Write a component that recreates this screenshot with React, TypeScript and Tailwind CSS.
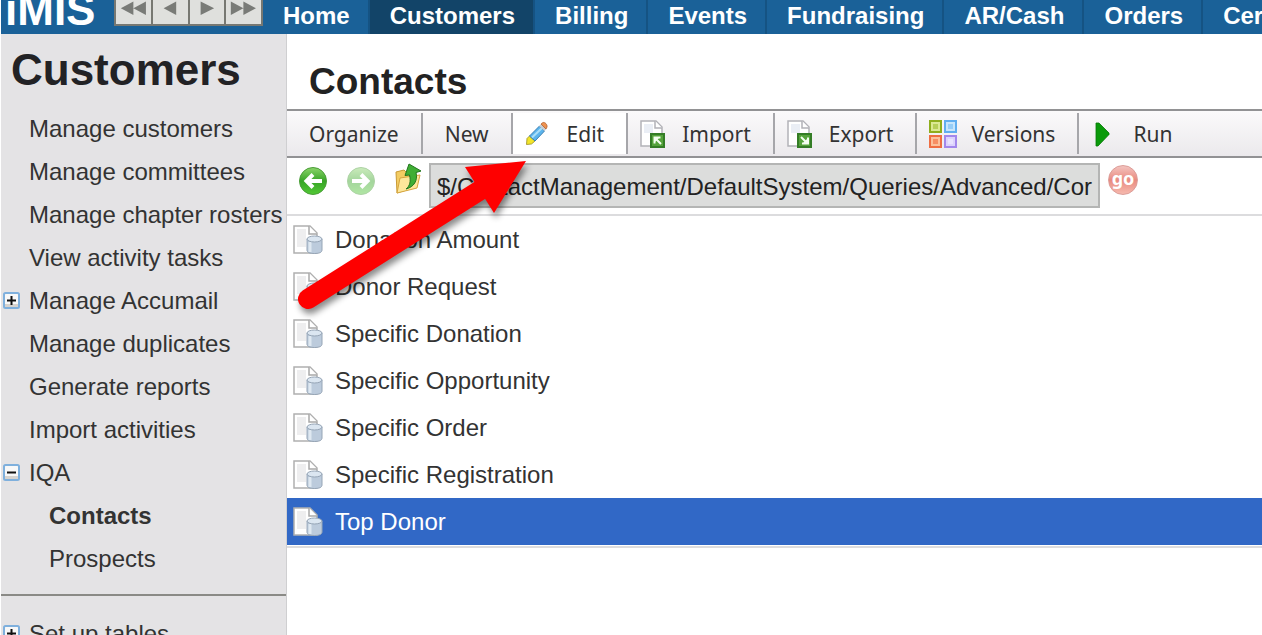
import { useState } from "react";
import type { ReactNode } from "react";

const tabs = ["Home", "Customers", "Billing", "Events", "Fundraising", "AR/Cash", "Orders", "Certification"];

interface NavItem {
  label: string;
  toggle?: "plus" | "minus";
  child?: boolean;
  active?: boolean;
}

const navItems: NavItem[] = [
  { label: "Manage customers" },
  { label: "Manage committees" },
  { label: "Manage chapter rosters" },
  { label: "View activity tasks" },
  { label: "Manage Accumail", toggle: "plus" },
  { label: "Manage duplicates" },
  { label: "Generate reports" },
  { label: "Import activities" },
  { label: "IQA", toggle: "minus" },
  { label: "Contacts", child: true, active: true },
  { label: "Prospects", child: true },
];

const queries = [
  "Donation Amount",
  "Donor Request",
  "Specific Donation",
  "Specific Opportunity",
  "Specific Order",
  "Specific Registration",
  "Top Donor",
];

function ToggleIcon({ kind }: { kind: "plus" | "minus" }) {
  return (
    <svg width="17" height="17" viewBox="0 0 17 17">
      <rect x="1" y="1" width="15" height="15" rx="1.5" fill="#f8f8f8" stroke="#7fb0dd" strokeWidth="2" />
      <path d="M2 12h13v3H2z" fill="#d6d3cf" />
      <path d="M4 8.5h9" stroke="#111" strokeWidth="2" />
      {kind === "plus" && <path d="M8.5 4v9" stroke="#111" strokeWidth="2" />}
    </svg>
  );
}

function PencilIcon() {
  return (
    <svg width="28" height="28" viewBox="0 0 28 28">
      <path d="M1.500 24.500L2 18.500 4.500 16l5.500 5-3.500 3z" fill="#f2e52a" stroke="#9a8d1c" strokeWidth="0.8" />
      <path d="M4.500 16L14.500 6l5 5L10 21z" fill="#5bb4ec" stroke="#3980b5" strokeWidth="1" />
      <path d="M7 17.500L17 8" stroke="#a9def8" strokeWidth="2" />
      <path d="M14 6l2-2 5.500 5-2 2z" fill="#c7cdd2" />
      <path d="M16 4l2-1.500c2-.5 4.500 2 4 4.500L21 9z" fill="#ee9250" stroke="#b4602c" strokeWidth="0.8" />
    </svg>
  );
}

function TransferIcon({ out }: { out?: boolean }) {
  return (
    <svg width="28" height="30" viewBox="0 0 28 30">
      <path d="M1 2h15l6 6v19H1z" fill="#fff" stroke="#b3b3b8" strokeWidth="1.500" />
      <path d="M4 5h9v9H4z" fill="#eaeef5" />
      <path d="M15 2v7h7" fill="#fff" stroke="#b3b3b8" strokeWidth="1.500" />
      <rect x="10" y="14" width="15" height="15" fill="#55a33b" />
      <rect x="11" y="15" width="13" height="13" fill="none" stroke="#347d26" strokeWidth="2" />
      <path
        d={out ? "M14 18l5 5M21 18.500v6h-6" : "M21 25l-5-5M14.500 24.500v-6h6"}
        fill="none"
        stroke="#f4fff0"
        strokeWidth="2"
      />
      <path d={out ? "M21 19v6h-6z" : "M14 18h6l-6 6z"} fill="#f4fff0" />
    </svg>
  );
}

function VersionsIcon() {
  return (
    <svg width="28" height="28" viewBox="0 0 28 28">
      <rect x="1" y="1" width="11" height="11" fill="#dbe992" stroke="#8fae1d" strokeWidth="2" />
      <rect x="16" y="1" width="11" height="11" fill="#c6e5fc" stroke="#61aef0" strokeWidth="2" />
      <rect x="1" y="16" width="11" height="11" fill="#fbc09c" stroke="#ef6e43" strokeWidth="2" />
      <rect x="16" y="16" width="11" height="11" fill="#ddd3fd" stroke="#a388ec" strokeWidth="2" />
      <path d="M4 4h5v5H4z" fill="#b7cf58" />
      <path d="M19 4h5v5h-5z" fill="#96cdf7" />
      <path d="M4 19h5v5H4z" fill="#f68e63" />
      <path d="M19 19h5v5h-5z" fill="#e9e3ff" />
    </svg>
  );
}

function RunIcon() {
  return (
    <svg width="28" height="28" viewBox="0 0 28 28">
      <path d="M5 3v23h2L18 14.500v-1.500L8 3z" fill="#0a9a0a" stroke="#067806" strokeWidth="0.800" />
    </svg>
  );
}

function HistoryIcon({ forward }: { forward?: boolean }) {
  return (
    <svg width="28" height="28" viewBox="0 0 28 28" opacity={forward ? 0.45 : 1}>
      <defs>
        <linearGradient id={forward ? "fwd" : "back"} x1="0" y1="0" x2="0" y2="1">
          <stop offset="0" stopColor="#8cd56b" />
          <stop offset="0.5" stopColor="#37a426" />
          <stop offset="1" stopColor="#52c935" />
        </linearGradient>
      </defs>
      <circle cx="14" cy="14" r="13.500" fill={forward ? "url(#fwd)" : "url(#back)"} stroke="#4a9d38" strokeWidth="1" />
      <path
        d={forward ? "M5 14h15M14 7.500l6.500 6.500-6.500 6.500" : "M23 14H8M14 7.500L7.500 14l6.500 6.500"}
        fill="none"
        stroke="#fff"
        strokeWidth="4"
      />
    </svg>
  );
}

function FolderUpIcon() {
  return (
    <svg width="26" height="36" viewBox="0 0 26 36">
      <path d="M1 9l8-2 2 2 9-1 1 16L2 30z" fill="#f3cc62" stroke="#c99a35" strokeWidth="1" />
      <path d="M2 30l3-15 20-3-3 13z" fill="#fde79b" stroke="#d6a53e" strokeWidth="1" />
      <path
        d="M11 26c4-3 5-8 3.500-14l-4.500.5L14 1l12 7-5 1.500c2 8-2 14.500-10 16.500z"
        fill="#3fae34"
        stroke="#23761e"
        strokeWidth="1"
      />
    </svg>
  );
}

function QueryIcon() {
  return (
    <svg width="30" height="30" viewBox="0 0 30 30">
      <path d="M1 1h16l7 7v20H1z" fill="#fff" stroke="#b0b0b0" strokeWidth="1.500" />
      <path d="M4 4h9v18H4z" fill="#eeeeef" />
      <path d="M16 1v8h8" fill="#fff" stroke="#a9a9a9" strokeWidth="1.500" />
      <path d="M14 14v11c0 2.500 3 3.500 7.500 3.500S29 27.500 29 25V14z" fill="#bccbdc" stroke="#96a5b6" strokeWidth="1" />
      <path d="M17 17v10" stroke="#dfe8f1" strokeWidth="3" />
      <ellipse cx="21.500" cy="14" rx="7.500" ry="3" fill="#dbe6f1" stroke="#96a5b6" strokeWidth="1" />
    </svg>
  );
}

const pagerShapes = [
  { label: "First", d: "M18 -1v14L5 6zM31 -1v14L18 6z" },
  { label: "Previous", d: "M24 -1v14L11 6z" },
  { label: "Next", d: "M11 -1v14l14-7z" },
  { label: "Last", d: "M5 -1v14l13-7zM18 -1v14l13-7z" },
];

function ToolButton({ icon, children, active }: { icon?: ReactNode; children: ReactNode; active?: boolean }) {
  return (
    <button
      className={
        "flex items-center gap-[14px] border-r-2 border-[#a6a6aa] pr-[22px] last:border-r-0 " +
        (icon ? "pl-3 " : "pl-[22px] ") +
        (active ? "bg-white" : "")
      }
    >
      {icon}
      <span>{children}</span>
    </button>
  );
}

function NavLink({ item }: { item: NavItem }) {
  return (
    <li className="flex h-[43px] items-center">
      <span className="w-7 shrink-0 pl-[2px]">{item.toggle && <ToggleIcon kind={item.toggle} />}</span>
      <a
        href="#"
        className={"whitespace-nowrap " + (item.child ? "pl-5 " : "") + (item.active ? "font-bold" : "")}
      >
        {item.label}
      </a>
    </li>
  );
}

export default function App() {
  const [selected, setSelected] = useState("Top Donor");
  const [path, setPath] = useState("$/ContactManagement/DefaultSystem/Queries/Advanced/Cor");

  return (
    <div className="relative flex h-screen flex-col overflow-hidden bg-white font-['Liberation_Sans',Arial,sans-serif] text-2xl text-[#333]">
      <header className="ml-px flex h-[34px] shrink-0 items-end overflow-hidden bg-[#1a6198] text-white">
        <div className="w-[113px] shrink-0 pb-1 pl-1 text-[44px] leading-10 font-bold">iMIS</div>
        <div className="flex w-[149px] shrink-0 self-start border-b-2 border-[#777872] bg-[#777872]">
          {pagerShapes.map((shape) => (
            <button key={shape.label} aria-label={shape.label} className="ml-[2px] h-6 flex-1 bg-[#dfe0dd] last:mr-[2px]">
              <svg className="w-full" height="24" viewBox="0 -2 36 24">
                <path d={shape.d} fill="#797b77" />
              </svg>
            </button>
          ))}
        </div>
        <nav className="flex font-bold whitespace-nowrap">
          {tabs.map((tab) => (
            <a
              key={tab}
              href="#"
              className={
                "h-[34px] border-r-2 border-[#155383] pr-[18px] pl-5 leading-8 " + (tab === "Customers" ? "bg-[#124468]" : "")
              }
            >
              {tab}
            </a>
          ))}
        </nav>
      </header>

      <div className="flex min-h-0 flex-1">
        <aside className="ml-px w-[286px] shrink-0 overflow-hidden border-r border-[#cfcfd1] bg-[#e4e3e5]">
          <h1 className="pt-[14px] pb-[15px] pl-[10px] text-[44px] leading-[44px] font-bold text-[#222225]">Customers</h1>
          <ul>
            {navItems.map((item) => (
              <NavLink key={item.label} item={item} />
            ))}
          </ul>
          <ul className="mt-[14px] border-t-2 border-[#8a8a86] pt-4">
            <NavLink item={{ label: "Set up tables", toggle: "plus" }} />
          </ul>
        </aside>

        <main className="min-w-0 flex-1">
          <h2 className="pt-7 pb-[7px] pl-[22px] text-[37px] leading-10 font-bold text-[#222]">Contacts</h2>

          <div className="flex h-[49px] border-y-2 border-[#929294] bg-linear-to-b from-[#fbfafb] to-[#ebe9ec] py-[2px] font-['Noto_Sans','Open_Sans',sans-serif] text-[21px]">
            <ToolButton>Organize</ToolButton>
            <ToolButton>New</ToolButton>
            <ToolButton icon={<PencilIcon />} active>
              Edit
            </ToolButton>
            <ToolButton icon={<TransferIcon />}>Import</ToolButton>
            <ToolButton icon={<TransferIcon out />}>Export</ToolButton>
            <ToolButton icon={<VersionsIcon />}>Versions</ToolButton>
            <ToolButton icon={<RunIcon />}>Run</ToolButton>
          </div>

          <form className="flex h-[58px] items-start border-b-2 border-[#dcdcde] pt-[5px] pl-3" onSubmit={(e) => e.preventDefault()}>
            <div className="flex h-9 shrink-0 items-center gap-5">
              <button type="button" aria-label="Back">
                <HistoryIcon />
              </button>
              <button type="button" aria-label="Forward">
                <HistoryIcon forward />
              </button>
              <button type="button" aria-label="Up one level">
                <FolderUpIcon />
              </button>
            </div>
            <input
              aria-label="Folder path"
              value={path}
              onChange={(e) => setPath(e.target.value)}
              className="mx-2 h-[45px] min-w-0 max-w-[671px] flex-1 border-2 border-[#b4b5b4] bg-[#dcdddc] pt-[3px] pl-[6px] text-[#222]"
            />
            <button className="mt-[2px] flex h-[30px] w-[30px] shrink-0 justify-center rounded-full border border-[#dc9d98] bg-linear-to-b from-[#f3c3bf] via-[#e88a80] to-[#f6b9ae] font-['Noto_Sans',sans-serif] text-lg leading-6 font-bold text-white">
              go
            </button>
          </form>

          <ul className="border-b-2 border-[#dcdcde] pb-px">
            {queries.map((query) => (
              <li key={query}>
                <button
                  onClick={() => setSelected(query)}
                  className={
                    "flex h-[47px] w-full items-center gap-3 pl-[6px] " +
                    (selected === query ? "bg-[#3168c6] text-white" : "")
                  }
                >
                  <QueryIcon />
                  <span>{query}</span>
                </button>
              </li>
            ))}
          </ul>
        </main>
      </div>

      {/* callout pointing at the Edit button */}
      <svg
        className="pointer-events-none absolute top-[150px] left-[290px] drop-shadow-[2px_5px_3px_rgba(0,0,0,0.45)]"
        width="250"
        height="170"
        viewBox="290 150 250 170"
      >
        <path d="M308 299L482 189" stroke="#fe0000" strokeWidth="20" strokeLinecap="round" />
        <path d="M526 161l-61 6 29 46z" fill="#fe0000" />
      </svg>
    </div>
  );
}
